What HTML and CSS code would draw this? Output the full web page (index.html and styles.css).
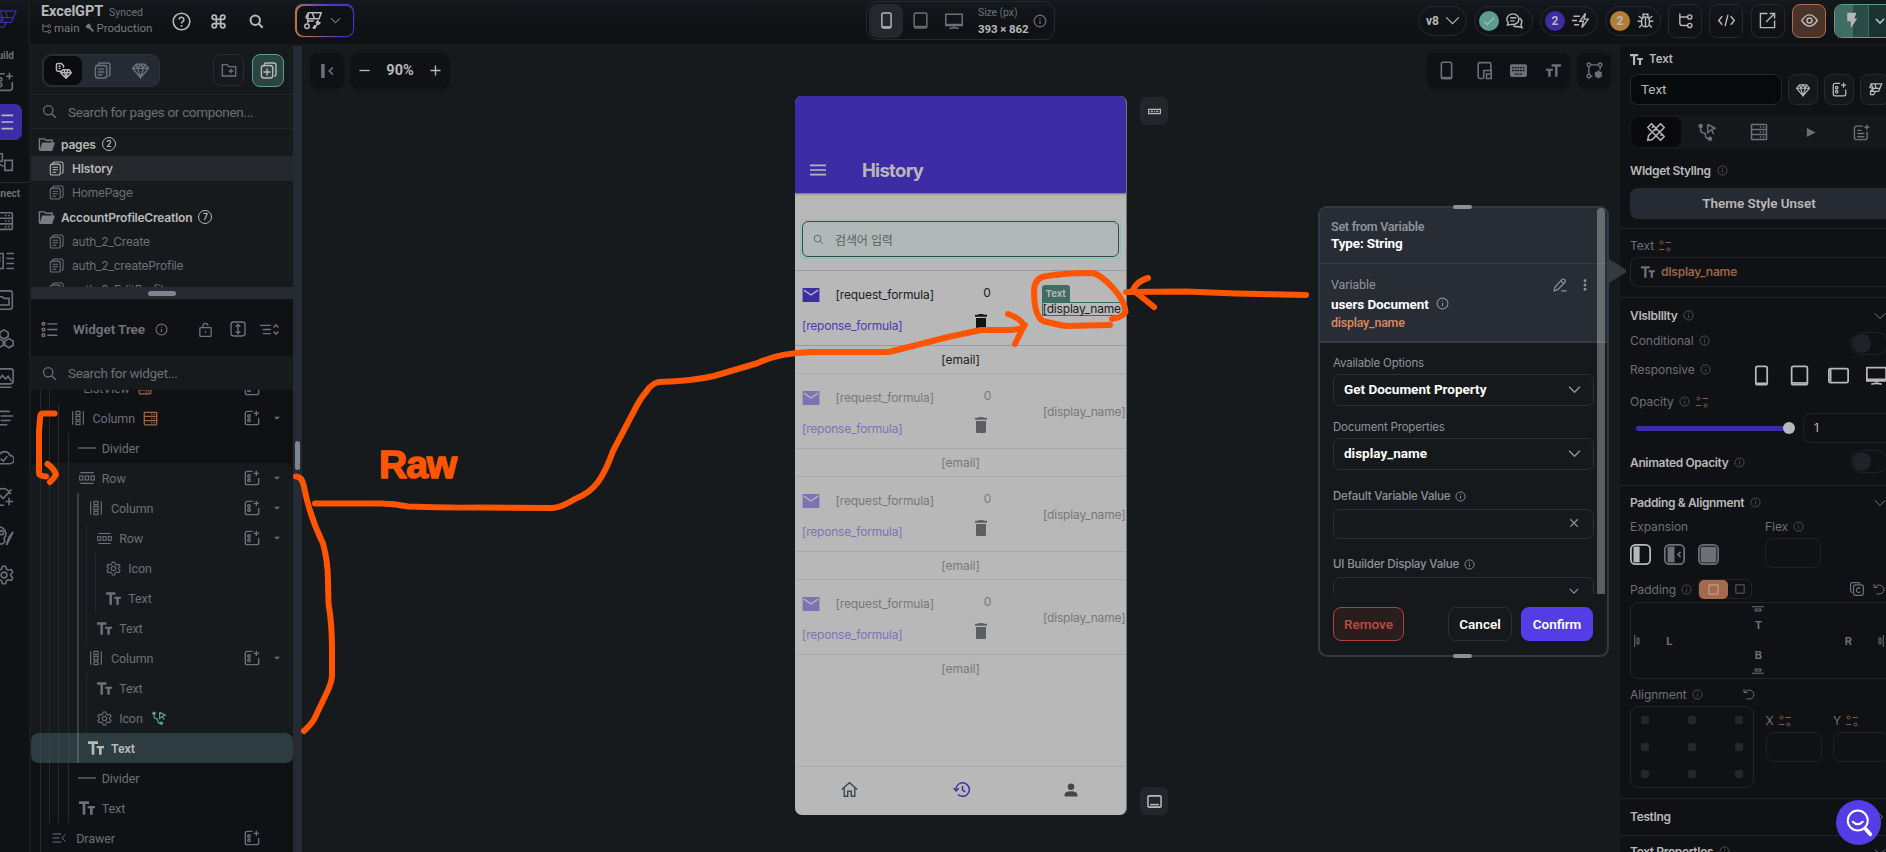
FILE: index.html
```
<!DOCTYPE html>
<html lang="en">
<head>
  <meta charset="utf-8">
  <title>ExcelGPT - Builder</title>
  <link rel="stylesheet" href="styles.css">
</head>
<body>
  <!-- icon sprite -->
  <svg class="sprite">
    <symbol id="logo" viewBox="0 0 24 24"><path d="M5 3h17l-3 7H8zM5 3 3 9l5 1M8 10l-4 5v5h5l3-5h5l2-5M11 3l2 7M4 15h8M8 10v5"/></symbol>
    <symbol id="aiwand" viewBox="0 0 24 24"><path d="M6 1h17l-3 8H5zM6 1 3 6v3M11 1l3 8M5 9v6M5 12h8M12 22l6-6"/><circle cx="4" cy="19" r="3"/><path class="fill" d="M15 14l4-4 1 3 3 1-4 4zM11 21l3 2 3-3-3-3z"/></symbol>
    <symbol id="branch" viewBox="0 0 24 24"><path d="M4 2v14q0 3 3 3h8M4 7h11"/><circle cx="18" cy="7" r="3"/><circle cx="18" cy="19" r="3"/></symbol>
    <symbol id="wrench" viewBox="0 0 24 24"><path d="M5 5l15 15M3 7a5 5 0 0 0 8 3l9 10M7 3a5 5 0 0 1 4 8M3 7l4 1 1-1-1-4"/></symbol>
    <symbol id="cmd" viewBox="0 0 24 24"><path d="M9 9h6v6H9zM9 9H6a3 3 0 1 1 3-3zM15 9V6a3 3 0 1 1 3 3zM15 15h3a3 3 0 1 1-3 3zM9 15v3a3 3 0 1 1-3-3z"/></symbol>
    <symbol id="search" viewBox="0 0 24 24"><circle cx="10" cy="10" r="7.500"/><path d="M15.500 15.500 22 22"/></symbol>
    <symbol id="help" viewBox="0 0 24 24"><circle cx="12" cy="12" r="10.500"/><path d="M9 9.500a3 3 0 1 1 4.500 2.700q-1.500.8-1.500 2.300M12 16.500v2"/></symbol>
    <symbol id="info" viewBox="0 0 24 24"><circle cx="12" cy="12" r="10"/><path d="M12 11v6M12 6.500v2"/></symbol>
    <symbol id="down" viewBox="0 0 24 24"><path d="M2 7l10 10L22 7"/></symbol>
    <symbol id="caret" viewBox="0 0 24 24"><path class="fill" d="M0 7h24L12 18z"/></symbol>
    <symbol id="page" viewBox="0 0 24 24"><path d="M6 6V4q0-2.500 2.500-2.500h11q3 0 3 3v13q0 2.500-2.500 2.500"/><rect x="2" y="5" width="16" height="17.500" rx="3.500"/><path d="M5.500 10h9M5.500 14h9M5.500 18h6"/></symbol>
    <symbol id="addpage" viewBox="0 0 24 24"><path d="M6 6V4q0-2.500 2.500-2.500h11q3 0 3 3v13q0 2.500-2.500 2.500"/><rect x="2" y="5" width="16" height="17.500" rx="3.500"/><path d="M10 9v10M5 14h10"/></symbol>
    <symbol id="gem" viewBox="0 0 24 24"><path d="M6 3h12l5 6-11 13L1 9zM1 9h22M6 3l2 6 4 13 4-13 2-6M8 9l4-6 4 6"/></symbol>
    <symbol id="pagegem" viewBox="0 0 24 24"><path d="M9 13H4q-2 0-2-2V4q0-2 2-2h5l3 3v3M5 6h3M5 9h3M11 11h9l3 4-7.500 8L8 15zM8 15h15M13 11l2.500 12L18 11"/></symbol>
    <symbol id="addfolder" viewBox="0 0 24 24"><path d="M2 4h7l3 3h10v14H2zM15 10v7M11.500 13.500h7"/></symbol>
    <symbol id="folder" viewBox="0 0 24 24"><path d="M2 20V4h7l2 2h9v4"/><path class="fill" d="M6 9h18l-4 12H2z"/></symbol>
    <symbol id="tree" viewBox="0 0 24 24"><circle cx="3.500" cy="4" r="2"/><circle cx="3.500" cy="12" r="2"/><circle cx="3.500" cy="20" r="2"/><path d="M9 4h14M9 12h14M9 20h14"/></symbol>
    <symbol id="lock" viewBox="0 0 24 24"><rect x="3" y="9" width="18" height="14" rx="1"/><path d="M8 9V6a4 4 0 0 1 8 0M12 14v3"/></symbol>
    <symbol id="updown" viewBox="0 0 24 24"><rect x="1.500" y="1.500" width="21" height="21" rx="4"/><path d="M12 5v14M8.500 8.500 12 5l3.500 3.500M8.500 15.500 12 19l3.500-3.500"/></symbol>
    <symbol id="collapse" viewBox="0 0 28 24"><path d="M0 6h16M4 12h12M4 18h12M20 9l3.500-4L27 9M20 15l3.500 4 3.500-4"/></symbol>
    <symbol id="column" viewBox="0 0 24 24"><path d="M4 2v20M20 2v20"/><rect x="9" y="2" width="6" height="5"/><rect x="9" y="9.500" width="6" height="5"/><rect x="9" y="17" width="6" height="5"/></symbol>
    <symbol id="row" viewBox="0 0 24 24"><path d="M2 4h20M2 20h20"/><rect x="1" y="9" width="5" height="6"/><rect x="9.500" y="9" width="5" height="6"/><rect x="18" y="9" width="5" height="6"/></symbol>
    <symbol id="line" viewBox="0 0 24 24"><path d="M0 12h24"/></symbol>
    <symbol id="gear" viewBox="0 0 24 24"><circle cx="12" cy="12" r="3.500"/><path d="M9 5l1.200-3.500h3.600L15 5l2 1.200 3.700-.7 1.800 3.100L20 11.500v1l2.500 2.900-1.800 3.100-3.700-.7L15 19l-1.200 3.500h-3.600L9 19l-2-1.200-3.700.7-1.800-3.100L4 12.500v-1L1.500 8.600l1.800-3.100 3.700.7z"/></symbol>
    <symbol id="tt" viewBox="0 0 24 24"><path class="fill" d="M0 2h15v4h-5.500v16h-4V6H0zM13 9h11v3.500h-3.500V22h-4v-9.500H13z"/></symbol>
    <symbol id="ttr" viewBox="0 0 24 24"><path class="fill" d="M24 2H9v4h5.500v16h4V6H24zM11 9H0v3.500h3.500V22h4v-9.500H11z"/></symbol>
    <symbol id="db" viewBox="0 0 24 24"><rect x="2" y="2" width="20" height="20" rx="1"/><path d="M2 8.700h20M2 15.400h20M13 5.400h2M17 5.400h2M13 12h2M17 12h2M13 18.700h2M17 18.700h2"/></symbol>
    <symbol id="addw" viewBox="0 0 24 24"><path d="M13 2H5Q2 2 2 5v14q0 3 3 3h14q3 0 3-3v-7M18.500 1v8M14.500 5h8"/><circle cx="7.500" cy="9" r="2"/><circle cx="7.500" cy="15.500" r="2"/></symbol>
    <symbol id="drawer" viewBox="0 0 24 24"><path d="M1 5h15M1 12h12M1 19h15M23 6l-6 6 6 6"/></symbol>
    <symbol id="action" viewBox="0 0 24 24"><circle class="fill" cx="3.500" cy="4" r="3"/><circle class="fill" cx="16" cy="21" r="3"/><path d="M3.500 5v4q0 4 3.500 4 3 0 3 4t5 4M13 2l10 5-5 2 3 6M13 2v11l5-4"/></symbol>
    <symbol id="phone" viewBox="0 0 24 24"><rect x="5.500" y="1.500" width="13" height="21" rx="2"/><path d="M6 21h12"/></symbol>
    <symbol id="tablet" viewBox="0 0 24 24"><rect x="3" y="1.500" width="18" height="21" rx="2"/><path d="M3.500 20.500h17"/></symbol>
    <symbol id="ltablet" viewBox="0 0 24 24"><rect x="1" y="4" width="22" height="16" rx="2"/><path d="M3 5v14"/></symbol>
    <symbol id="desktop" viewBox="0 0 24 24"><path d="M1 3h22v15H1zM1 16.500h22M6 22q6-2 12 0M12 18v3"/></symbol>
    <symbol id="chat" viewBox="0 0 24 24"><path d="M2 18.500 3.200 15A8.500 7.500 0 1 1 8 17.500zM19.500 8.500q4.500 4 1.500 9l1.500 4.500-5-1.500q-4 1-7-1M6 8h8.500M6 12.500h6"/></symbol>
    <symbol id="bolt" viewBox="0 0 24 24"><path d="M19 2l-8 11h5l-2 9 9-12h-6zM2 6h9M0 12h7M3 18h7"/></symbol>
    <symbol id="bug" viewBox="0 0 24 24"><rect x="6.500" y="7" width="11" height="14" rx="5.500"/><path d="M8 7a4 4 0 0 1 8 0M12 8v13M6 13H1M18 13h5M7 9 2.500 6M17 9l4.500-3M7 18l-4 4M17 18l4 4M8 2l2 2M16 2l-2 2"/></symbol>
    <symbol id="code" viewBox="0 0 24 24"><path d="M6 6l-5 6 5 6M18 6l5 6-5 6M14 4l-4 16"/></symbol>
    <symbol id="open" viewBox="0 0 24 24"><path d="M12 2H2v20h20V12M15 2h7v7M22 2 10 14"/></symbol>
    <symbol id="eye" viewBox="0 0 24 24"><path d="M1 12q11-16 22 0-11 16-22 0z"/><circle cx="12" cy="12" r="3.500"/></symbol>
    <symbol id="flash" viewBox="0 0 24 24"><path class="fill" d="M6 1h13l-3 8h4l-9 14v-10H6z"/></symbol>
    <symbol id="hide" viewBox="0 0 24 24"><path class="fill" d="M2 0h6v24H2z"/><path d="M22 6l-6 6 6 6"/></symbol>
    <symbol id="minus" viewBox="0 0 24 24"><path d="M1 12h22"/></symbol>
    <symbol id="plus" viewBox="0 0 24 24"><path d="M1 12h22M12 1v22"/></symbol>
    <symbol id="pip" viewBox="0 0 24 24"><path d="M10 22H6q-2 0-2-2V4q0-2 2-2h12q2 0 2 2v7M11 22V12h9.500v10M14.500 22v-5.500h6V22z"/></symbol>
    <symbol id="kbd" viewBox="0 0 24 24"><rect class="fill" x="0" y="3" width="24" height="18" rx="2.500"/><path class="keys" d="M3 8h18M3 12h18M7 17h10"/></symbol>
    <symbol id="nodes" viewBox="0 0 24 24"><circle cx="4" cy="4" r="2.500"/><circle cx="20" cy="4" r="2.500"/><circle cx="4" cy="20" r="2.500"/><path d="M6.500 4h11M4 6.500v11M20 6.500V11M6.500 20H9"/><path class="fill" d="M16 12h3l.5 2 2-.5 1.500 2.500-1.500 1.500 1.500 1.500-1.500 2.500-2-.5-.5 2h-3l-.5-2-2 .5-1.500-2.500 1.500-1.500-1.500-1.500 1.500-2.500 2 .5z"/></symbol>
    <symbol id="menu" viewBox="0 0 24 24"><path d="M0 5h24M0 12h24M0 19h24"/></symbol>
    <symbol id="mail" viewBox="0 0 24 20"><path class="fill" d="M0 0h24v20H0z"/><path class="hole" d="M2 3l10 7 10-7"/></symbol>
    <symbol id="trash" viewBox="0 0 18 24"><path class="fill" d="M0 1h5l1-1h6l1 1h5v3H0zM1.500 6h15v16q0 2-2 2h-11q-2 0-2-2z"/></symbol>
    <symbol id="home" viewBox="0 0 24 24"><path d="M1 12 12 2.500 23 12M4.500 10v11.500H9.500v-7h5v7h5V10"/></symbol>
    <symbol id="history" viewBox="0 0 24 24"><path d="M4 12a9.500 9.500 0 1 1 3 7M1 10l3.500 4L8 10M13.500 7v6l4 2.500"/></symbol>
    <symbol id="person" viewBox="0 0 24 24"><circle class="fill" cx="12" cy="6.500" r="5.500"/><path class="fill" d="M1 23v-3q0-6 11-6t11 6v3z"/></symbol>
    <symbol id="appbar" viewBox="0 0 24 24"><path d="M1 8h22v8H1zM5 12h4M11 12h2M15 12h4"/></symbol>
    <symbol id="navbar" viewBox="0 0 24 24"><rect x="1.500" y="3" width="21" height="18" rx="2"/><path d="M5 17h14"/></symbol>
    <symbol id="pencil" viewBox="0 0 24 24"><path d="M2 22l1-6L16 2q2-1 4 1t1 4L8 20zM14 5l4 4M14 22h9"/></symbol>
    <symbol id="dots" viewBox="0 0 24 24"><circle class="fill" cx="12" cy="3.500" r="2.800"/><circle class="fill" cx="12" cy="12" r="2.800"/><circle class="fill" cx="12" cy="20.500" r="2.800"/></symbol>
    <symbol id="x" viewBox="0 0 24 24"><path d="M3 3l18 18M21 3 3 21"/></symbol>
    <symbol id="tools" viewBox="0 0 24 24"><path d="M6 1 1 6l17 17 5-5zM18 1l5 5L7 22l-6 1 1-6zM9 4 6.500 6.500M13 8l-2 2M17 12l-2.500 2.500M20 15l-2 2"/></symbol>
    <symbol id="play" viewBox="0 0 24 24"><path class="fill" d="M4 2l19 10-19 10z"/></symbol>
    <symbol id="note" viewBox="0 0 24 24"><path d="M14 3H5Q2 3 2 6v13q0 3 3 3h12q3 0 3-3v-8M19.500 1v7M16 4.500h7M6 9h6M6 13.500h10M6 18h10"/></symbol>
    <symbol id="bind" viewBox="0 0 24 24"><circle cx="5" cy="5" r="3"/><circle cx="19" cy="19" r="3"/><path d="M13 5h11M0 19h11"/></symbol>
    <symbol id="copy" viewBox="0 0 24 24"><path d="M4 18q-3 0-3-3V4q0-3 3-3h10q3 0 3 3"/><rect x="6" y="5" width="17" height="18" rx="4"/><path d="M18 11.500a4 4 0 1 0 0 5"/></symbol>
    <symbol id="undo" viewBox="0 0 24 24"><path d="M2 2v7h7M3 9a10 9 0 1 1 4 12"/></symbol>
    <symbol id="ex1" viewBox="0 0 24 24"><rect x="1" y="1" width="22" height="22" rx="5"/><path class="fill" d="M4 3h7v18H4z"/></symbol>
    <symbol id="ex2" viewBox="0 0 24 24"><rect x="1" y="1" width="22" height="22" rx="5"/><path class="fill" d="M4 3h8v18H4z"/><path d="M19 9l-3 3 3 3"/></symbol>
    <symbol id="ex3" viewBox="0 0 24 24"><rect x="1" y="1" width="22" height="22" rx="5"/><rect class="fill" x="3" y="3" width="18" height="18" rx="2"/></symbol>
    <symbol id="padtop" viewBox="0 0 24 12"><path d="M0 1.500h24M6 6h12v4H6z"/></symbol>
    <symbol id="square" viewBox="0 0 24 24"><path d="M2 2h20v20H2z"/></symbol>
    <symbol id="comps" viewBox="0 0 24 24"><path d="M2 2h8v9H2zM13 10h9v12h-9zM6 11q0 6 7 6"/></symbol>
    <symbol id="cols" viewBox="0 0 24 24"><path d="M1 3h10v18H1zM15 3h9M15 9h9M15 15h9M15 21h9M4 8h4M4 12h4"/></symbol>
    <symbol id="file" viewBox="0 0 24 24"><rect x="1" y="1" width="21" height="22" rx="3"/><path d="M5 8h5l2 2h6v8H5z"/></symbol>
    <symbol id="hex" viewBox="0 0 24 24"><path d="M12 1l5 3v5l-5 3-5-3V4zM6 11.500l5 3v5l-5 3-5-3v-5zM18 11.500l5 3v5l-5 3-5-3v-5z"/></symbol>
    <symbol id="image" viewBox="0 0 24 24"><rect x="1" y="1" width="22" height="18" rx="3"/><path d="M4 16l6-7 4 4 3-3 4 6M3 23h18"/></symbol>
    <symbol id="lines" viewBox="0 0 24 24"><path d="M1 4h18M8 9.500h15M8 15h12M2 20h14"/></symbol>
    <symbol id="cloud" viewBox="0 0 24 24"><path d="M6 20a5 5 0 0 1 0-10 7 7 0 0 1 13 0 5 5 0 0 1 0 10zM8 14l3 3 5-6"/></symbol>
    <symbol id="check" viewBox="0 0 24 24"><path d="M20 10a10 10 0 1 0-8 13M7 11l4 4L21 4M18 14v9M14 18.500h9"/></symbol>
    <symbol id="palette" viewBox="0 0 24 24"><path d="M12 15a8 8 0 1 0-8 2q3 0 2 3 3 4 7-1zM23 7l-8 16M23 7q-6 6-8 16"/><circle cx="9" cy="8" r="2.500"/></symbol>
    <symbol id="tick" viewBox="0 0 24 24"><path d="M4 13l5 5L21 6"/></symbol>
  </svg>

  <header class="topbar">
    <div class="brand"><svg class="ic"><use href="#logo"/></svg></div>
    <div class="project">
      <div><b>ExcelGPT</b><span class="synced">Synced</span></div>
      <div class="env"><svg class="ic s11"><use href="#branch"/></svg>main<svg class="ic s10"><use href="#wrench"/></svg>Production</div>
    </div>
    <div class="quick">
      <svg class="ic s19"><use href="#help"/></svg>
      <svg class="ic s17"><use href="#cmd"/></svg>
      <svg class="ic s15"><use href="#search"/></svg>
    </div>
    <button class="ai"><span><svg class="ic s18"><use href="#aiwand"/></svg><svg class="ic s11"><use href="#down"/></svg></span></button>
    <div class="devices">
      <div class="dev on"><svg class="ic s17"><use href="#phone"/></svg></div>
      <div class="dev"><svg class="ic s17"><use href="#tablet"/></svg></div>
      <div class="dev"><svg class="ic s18"><use href="#desktop"/></svg></div>
      <div class="size"><span>Size (px)</span><b>393 × 862</b></div>
      <svg class="ic s14"><use href="#info"/></svg>
    </div>
    <div class="actions">
      <div class="pill version">v8<svg class="ic s15"><use href="#down"/></svg></div>
      <div class="pill status"><span class="dot green"><svg class="ic s14"><use href="#tick"/></svg></span><svg class="ic s17"><use href="#chat"/></svg></div>
      <div class="pill runs"><span class="dot violet">2</span><svg class="ic s17"><use href="#bolt"/></svg></div>
      <div class="pill bugs"><span class="dot amber">2</span><svg class="ic s17"><use href="#bug"/></svg></div>
      <div class="sq"><svg class="ic s17"><use href="#branch"/></svg></div>
      <div class="sq"><svg class="ic s17"><use href="#code"/></svg></div>
      <div class="sq"><svg class="ic s17"><use href="#open"/></svg></div>
      <div class="sq preview"><svg class="ic s17"><use href="#eye"/></svg></div>
      <div class="run"><div><svg class="ic s17"><use href="#flash"/></svg></div><svg class="ic s10"><use href="#down"/></svg></div>
    </div>
  </header>

  <div class="workspace">
    <nav class="rail">
      <div class="railin">
        <span class="cap build">Build</span>
        <svg class="ic"><use href="#addw"/></svg>
        <div class="railon"><svg class="ic"><use href="#tree"/></svg></div>
        <svg class="ic"><use href="#comps"/></svg>
        <hr>
        <span class="cap">Connect</span>
        <svg class="ic"><use href="#db"/></svg>
        <svg class="ic"><use href="#cols"/></svg>
        <svg class="ic"><use href="#file"/></svg>
        <svg class="ic"><use href="#hex"/></svg>
        <svg class="ic"><use href="#image"/></svg>
        <svg class="ic"><use href="#lines"/></svg>
        <svg class="ic"><use href="#cloud"/></svg>
        <svg class="ic"><use href="#check"/></svg>
        <svg class="ic"><use href="#palette"/></svg>
        <svg class="ic"><use href="#gear"/></svg>
      </div>
    </nav>

    <aside class="left">
      <div class="pages">
        <div class="pagetabs">
          <div class="seg">
            <div class="on"><svg class="ic s17"><use href="#pagegem"/></svg></div>
            <div><svg class="ic s17"><use href="#page"/></svg></div>
            <div><svg class="ic s17"><use href="#gem"/></svg></div>
          </div>
          <div class="fbtn"><svg class="ic s16"><use href="#addfolder"/></svg></div>
          <div class="fbtn add"><svg class="ic s17"><use href="#addpage"/></svg></div>
        </div>
        <div class="find top"><svg class="ic s15"><use href="#search"/></svg>Search for pages or componen...</div>
        <div class="plist">
          <div class="folder"><svg class="ic s17"><use href="#folder"/></svg>pages<i>2</i></div>
          <div class="pg on"><svg class="ic s15"><use href="#page"/></svg>HIstory</div>
          <div class="pg"><svg class="ic s15"><use href="#page"/></svg>HomePage</div>
          <div class="folder"><svg class="ic s17"><use href="#folder"/></svg><span class="acc">AccountProfileCreatIon</span><i>7</i></div>
          <div class="pg"><svg class="ic s15"><use href="#page"/></svg>auth_2_Create</div>
          <div class="pg"><svg class="ic s15"><use href="#page"/></svg>auth_2_createProfile</div>
          <div class="pg"><svg class="ic s15"><use href="#page"/></svg>auth_2_EditProfile</div>
        </div>
      </div>
      <div class="hsplit"><span></span></div>
      <div class="treehead">
        <svg class="ic s17"><use href="#tree"/></svg>
        <b>Widget Tree</b>
        <svg class="ic s13"><use href="#info"/></svg>
        <svg class="ic s15 push"><use href="#lock"/></svg>
        <svg class="ic s16"><use href="#updown"/></svg>
        <svg class="ic s19"><use href="#collapse"/></svg>
      </div>
      <div class="find"><svg class="ic s15"><use href="#search"/></svg>Search for widget...</div>
      <div class="tree">
        <div class="tr first"><i></i><i></i><svg class="ic s14 w"><use href="#line"/></svg><span>ListView</span><svg class="ic s14 data"><use href="#db"/></svg><svg class="ic s16 addw"><use href="#addw"/></svg><em></em></div>
        <div class="tr"><i></i><i></i><i></i><svg class="ic s16 w"><use href="#column"/></svg><span>Column</span><svg class="ic s15 data"><use href="#db"/></svg><svg class="ic s16 addw"><use href="#addw"/></svg><svg class="ic s6"><use href="#caret"/></svg></div>
        <div class="tr"><i></i><i></i><i></i><i></i><svg class="ic s18 w"><use href="#line"/></svg><span>Divider</span></div>
        <div class="branch">
          <div class="tr"><i></i><i></i><i></i><i></i><svg class="ic s16 w"><use href="#row"/></svg><span>Row</span><svg class="ic s16 addw"><use href="#addw"/></svg><svg class="ic s6"><use href="#caret"/></svg></div>
          <div class="tr"><i></i><i></i><i></i><i></i><i class="hl"></i><svg class="ic s16 w"><use href="#column"/></svg><span>Column</span><svg class="ic s16 addw"><use href="#addw"/></svg><svg class="ic s6"><use href="#caret"/></svg></div>
          <div class="tr"><i></i><i></i><i></i><i></i><i class="hl"></i><i></i><svg class="ic s15 w"><use href="#row"/></svg><span>Row</span><svg class="ic s16 addw"><use href="#addw"/></svg><svg class="ic s6"><use href="#caret"/></svg></div>
          <div class="tr"><i></i><i></i><i></i><i></i><i class="hl"></i><i></i><i></i><svg class="ic s15 w"><use href="#gear"/></svg><span>Icon</span></div>
          <div class="tr"><i></i><i></i><i></i><i></i><i class="hl"></i><i></i><i></i><svg class="ic s15 w"><use href="#tt"/></svg><span>Text</span></div>
          <div class="tr"><i></i><i></i><i></i><i></i><i class="hl"></i><i></i><svg class="ic s15 w"><use href="#tt"/></svg><span>Text</span></div>
          <div class="tr"><i></i><i></i><i></i><i></i><i class="hl"></i><svg class="ic s16 w"><use href="#column"/></svg><span>Column</span><svg class="ic s16 addw"><use href="#addw"/></svg><svg class="ic s6"><use href="#caret"/></svg></div>
          <div class="tr"><i></i><i></i><i></i><i></i><i class="hl"></i><i></i><svg class="ic s15 w"><use href="#tt"/></svg><span>Text</span></div>
          <div class="tr"><i></i><i></i><i></i><i></i><i class="hl"></i><i></i><svg class="ic s15 w"><use href="#gear"/></svg><span>Icon</span><svg class="ic s14 act"><use href="#action"/></svg></div>
        </div>
        <div class="tr sel"><i></i><i></i><i></i><i></i><i class="hl"></i><svg class="ic s16 w"><use href="#tt"/></svg><span>Text</span></div>
        <div class="tr"><i></i><i></i><i></i><i></i><svg class="ic s18 w"><use href="#line"/></svg><span>Divider</span></div>
        <div class="tr"><i></i><i></i><i></i><i></i><svg class="ic s16 w"><use href="#tt"/></svg><span>Text</span></div>
        <div class="tr"><i></i><i class="no"></i><svg class="ic s14 w drawer"><use href="#drawer"/></svg><span>Drawer</span><svg class="ic s16 addw"><use href="#addw"/></svg><em></em></div>
      </div>
    </aside>
    <div class="vsplit"><span></span></div>

    <main class="canvas">
      <div class="tools">
        <div class="tbox one"><svg class="ic s14 thick"><use href="#hide"/></svg></div>
        <div class="tbox zoom"><svg class="ic s11 thick"><use href="#minus"/></svg><b>90%</b><svg class="ic s11 thick"><use href="#plus"/></svg></div>
        <div class="tbox modes"><svg class="ic s19"><use href="#phone"/></svg><svg class="ic s19"><use href="#pip"/></svg><svg class="ic s17 kb"><use href="#kbd"/></svg><svg class="ic s15"><use href="#ttr"/></svg></div>
        <div class="tbox one"><svg class="ic s17"><use href="#nodes"/></svg></div>
      </div>
      <div class="stage">
        <div class="phone">
          <div class="appbar"><svg class="ic s16"><use href="#menu"/></svg><h1>History</h1></div>
          <div class="body">
            <div class="field"><div><svg class="ic s11"><use href="#search"/></svg>검색어 입력</div></div>
            <div class="item live">
              <div class="c1"><p><svg class="mail"><use href="#mail"/></svg>[request_formula]</p><p class="resp">[reponse_formula]</p></div>
              <div class="c2"><span>0</span><svg class="trash"><use href="#trash"/></svg></div>
              <div class="c3"><span class="picked"><b>Text</b>[display_name]</span></div>
            </div>
            <div class="email live">[email]</div>
            <div class="item">
              <div class="c1"><p><svg class="mail"><use href="#mail"/></svg>[request_formula]</p><p class="resp">[reponse_formula]</p></div>
              <div class="c2"><span>0</span><svg class="trash"><use href="#trash"/></svg></div>
              <div class="c3"><span>[display_name]</span></div>
            </div>
            <div class="email">[email]</div>
            <div class="item">
              <div class="c1"><p><svg class="mail"><use href="#mail"/></svg>[request_formula]</p><p class="resp">[reponse_formula]</p></div>
              <div class="c2"><span>0</span><svg class="trash"><use href="#trash"/></svg></div>
              <div class="c3"><span>[display_name]</span></div>
            </div>
            <div class="email">[email]</div>
            <div class="item">
              <div class="c1"><p><svg class="mail"><use href="#mail"/></svg>[request_formula]</p><p class="resp">[reponse_formula]</p></div>
              <div class="c2"><span>0</span><svg class="trash"><use href="#trash"/></svg></div>
              <div class="c3"><span>[display_name]</span></div>
            </div>
            <div class="email">[email]</div>
          </div>
          <div class="nav"><svg class="ic s17"><use href="#home"/></svg><svg class="ic s17 cur"><use href="#history"/></svg><svg class="ic s14"><use href="#person"/></svg></div>
        </div>
        <div class="chips">
          <div><svg class="ic s13"><use href="#appbar"/></svg></div>
          <div><svg class="ic s15"><use href="#navbar"/></svg></div>
        </div>
      </div>
    </main>

    <aside class="props">
      <div class="phead"><svg class="ic s13"><use href="#tt"/></svg>Text</div>
      <div class="nameline">
        <div class="name">Text</div>
        <div class="nb"><svg class="ic s14"><use href="#gem"/></svg></div>
        <div class="nb"><svg class="ic s15"><use href="#addw"/></svg></div>
        <div class="nb"><svg class="ic s15"><use href="#logo"/></svg></div>
      </div>
      <div class="ptabs">
        <div class="on"><svg class="ic s18"><use href="#tools"/></svg></div>
        <div><svg class="ic s18"><use href="#action"/></svg></div>
        <div><svg class="ic s18"><use href="#db"/></svg></div>
        <div><svg class="ic s11"><use href="#play"/></svg></div>
        <div><svg class="ic s17"><use href="#note"/></svg></div>
      </div>
      <section class="styling">
        <h3>WIdget StylIng <svg class="ic s11"><use href="#info"/></svg></h3>
        <div class="theme">Theme Style Unset</div>
      </section>
      <section class="textval">
        <label>Text <svg class="ic s12 o"><use href="#bind"/></svg></label>
        <div class="bound"><svg class="ic s14"><use href="#tt"/></svg>dIsplay_name</div>
      </section>
      <section class="vis">
        <h3>VIsIbIlIty <svg class="ic s11"><use href="#info"/></svg><svg class="ic s12 fold"><use href="#down"/></svg></h3>
        <div class="pr cond"><label>Conditional <svg class="ic s11"><use href="#info"/></svg></label><span class="toggle"></span></div>
        <div class="pr resp2"><label>Responsive <svg class="ic s11"><use href="#info"/></svg></label>
          <span class="rdev"><svg class="ic s21"><use href="#phone"/></svg><svg class="ic s21"><use href="#tablet"/></svg><svg class="ic s21"><use href="#ltablet"/></svg><svg class="ic s21"><use href="#desktop"/></svg></span></div>
        <div class="pr opa"><label>Opacity <svg class="ic s11"><use href="#info"/></svg><svg class="ic s12 o"><use href="#bind"/></svg></label></div>
        <div class="slider"><span></span><b></b><div>1</div></div>
        <div class="pr anim"><h3>Animated Opacity <svg class="ic s11"><use href="#info"/></svg></h3><span class="toggle"></span></div>
      </section>
      <section class="pad">
        <h3>Padding &amp; Alignment <svg class="ic s11"><use href="#info"/></svg><svg class="ic s12 fold"><use href="#down"/></svg></h3>
        <div class="expand">
          <div class="ecol"><label>Expansion</label><div><svg class="ic s21 lit"><use href="#ex1"/></svg><svg class="ic s21"><use href="#ex2"/></svg><svg class="ic s21"><use href="#ex3"/></svg></div></div>
          <div><label>Flex <svg class="ic s11"><use href="#info"/></svg></label><div class="num"></div></div>
        </div>
        <div class="padline"><label>Padding <svg class="ic s11"><use href="#info"/></svg></label>
          <div class="padsw"><span><svg class="ic s11"><use href="#square"/></svg></span><svg class="ic s10"><use href="#square"/></svg></div>
          <svg class="ic s14 cp"><use href="#copy"/></svg><svg class="ic s12"><use href="#undo"/></svg></div>
        <div class="padbox">
          <svg class="side l"><use href="#padtop"/></svg><b>L</b>
          <div><svg class="edge"><use href="#padtop"/></svg><b class="t">T</b><b class="b">B</b><svg class="edge flip"><use href="#padtop"/></svg></div>
          <b>R</b><svg class="side r"><use href="#padtop"/></svg>
        </div>
        <div class="alignline"><label>Alignment <svg class="ic s11"><use href="#info"/></svg></label><svg class="ic s12"><use href="#undo"/></svg></div>
        <div class="align">
          <div class="grid9"><i></i><i></i><i></i><i></i><i></i><i></i><i></i><i></i><i></i></div>
          <div class="xy"><label>X <svg class="ic s12 o"><use href="#bind"/></svg></label><div class="num"></div></div>
          <div class="xy"><label>Y <svg class="ic s12 o"><use href="#bind"/></svg></label><div class="num"></div></div>
        </div>
      </section>
      <section class="testing"><h3>TestIng <svg class="ic s12 fold side-arrow"><use href="#down"/></svg></h3></section>
      <section class="textprops"><h3>Text PropertIes <svg class="ic s11"><use href="#info"/></svg><svg class="ic s12 fold"><use href="#down"/></svg></h3></section>
    </aside>
  </div>

  <!-- variable dialog, floats over the canvas -->
  <div class="dialog">
    <span class="grip top"></span>
    <div class="scroll">
      <div class="dhead"><span>Set from Variable</span><b>Type: String</b></div>
      <div class="dvar">
        <div class="vline"><span>Variable</span><svg class="ic s14"><use href="#pencil"/></svg><svg class="ic s12"><use href="#dots"/></svg></div>
        <b>users Document <svg class="ic s13"><use href="#info"/></svg></b>
        <em>display_name</em>
      </div>
      <div class="dform">
        <label>Available Options</label>
        <div class="select">Get Document Property<svg class="ic s13"><use href="#down"/></svg></div>
        <label class="l2">Document Properties</label>
        <div class="select">display_name<svg class="ic s13"><use href="#down"/></svg></div>
        <label class="l3">Default Variable Value <svg class="ic s11"><use href="#info"/></svg></label>
        <div class="select short"><svg class="ic s10"><use href="#x"/></svg></div>
        <label class="l4">UI Builder Display Value <svg class="ic s11"><use href="#info"/></svg></label>
        <div class="select short"><svg class="ic s10"><use href="#down"/></svg></div>
      </div>
    </div>
    <span class="bar"></span>
    <div class="dfoot"><button class="remove">Remove</button><button class="cancel">Cancel</button><button class="confirm">Confirm</button></div>
    <span class="grip bottom"></span>
    <span class="pointer"></span>
  </div>

  <div class="fab">
    <svg viewBox="0 0 24 24"><circle cx="11" cy="10" r="8"/><path d="M7 11q4 4 8 0"/><path class="handle" d="M17.500 17 21 21"/></svg>
  </div>

  <!-- marker notes drawn over the screen -->
  <svg class="notes" viewBox="0 0 1886 852">
    <path d="M54.500 413.500H43q-3 0-3 5L39 432v41q0 3 7 3.500M47.500 464q6 4 8.500 10.500-2 4-6 7.500"/>
    <path d="M296 476.500q6 0 8 10 5 28 19 57 5 18 5 38l.5 22q3.500 20 3.500 46v26q0 7-7 21l-11 23q-3 5-10 11.500"/>
    <path d="M315 503.500h66q13 0 27 3 35 1.500 72 1l72 .5q8 0 23-9 15-6 23-17 8-11 15-31l21-40q6-12 12-19 6-9 13-10 34-1 55-6l44-13q20-10 53-11h78l59-15 33-7h27q14 0 17-5M1008 314q14 5 16 12-4 8-9 18"/>
    <path d="M1110 325l-43 1q-9-1-24-5-9-5-9-31 1-13 13-14 16-3 46-3 8 2 20 15 12 13 12.500 24-2 5-13.500 7"/>
    <path d="M1126 292l60-.5 50 2 70 1.500M1148 278q-11 3-15 12l21 17"/>
    <text x="379" y="478">Raw</text>
  </svg>
</body>
</html>
```

FILE: styles.css
```
* { box-sizing: border-box; }
html, body { height: 100%; }
body {
  margin: 0;
  overflow: hidden;
  background: #171a1d;
  color: #6c7078;
  font-family: Roboto, "Open Sans", sans-serif;
  font-size: 13px;
  display: flex;
  flex-direction: column;
}
h1, h3, p { margin: 0; }
button { font: inherit; padding: 0; }
i, em { font-style: normal; }

/* icons */
.sprite { position: absolute; width: 0; height: 0; }
.ic { width: 20px; height: 20px; fill: none; stroke: currentColor; stroke-width: 2; flex: none; overflow: visible; display: block; }
.ic .fill, .fill { fill: currentColor; stroke: none; }
.hole { fill: none; stroke: #b8b8b8; stroke-width: 2; }
.keys { stroke: #101115; stroke-width: 1.800; stroke-dasharray: 2.500 1.200; }
.thick { stroke-width: 3; }
.s6 { width: 6px; height: 6px; }
.s10 { width: 10px; height: 10px; }
.s11 { width: 11px; height: 11px; }
.s12 { width: 12px; height: 12px; }
.s13 { width: 13px; height: 13px; }
.s14 { width: 14px; height: 14px; }
.s15 { width: 15px; height: 15px; }
.s16 { width: 16px; height: 16px; }
.s17 { width: 17px; height: 17px; }
.s18 { width: 18px; height: 18px; }
.s19 { width: 19px; height: 19px; }
.s21 { width: 21px; height: 21px; }

/* top bar */
.topbar {
  height: 44px;
  flex: none;
  display: flex;
  background: linear-gradient(#14191c, #101115 60%);
  color: #b8b8b8;
}
.topbar > * { flex: none; }
.brand { width: 30px; border-right: 2px solid #1a1c20; color: #3d2ca6; padding-top: 8px; overflow: hidden; }
.brand .ic { margin-left: -5px; width: 23px; height: 23px; stroke-width: 1.300; }
.project { width: 130px; padding: 3px 0 0 11px; white-space: nowrap; }
.project b { font-size: 14.500px; letter-spacing: -.1px; }
.synced { font-size: 10.500px; color: #6c7078; margin-left: 6px; }
.env { display: flex; align-items: center; gap: 2px; font-size: 11.500px; color: #777a80; margin-top: 1px; }
.env .s10 { margin-left: 3px; stroke-width: 4; }
.quick { width: 135px; display: flex; align-items: center; gap: 19.500px; padding: 0 0 2px 11.500px; }
.quick .s15 { stroke-width: 3.200; margin-left: 2px; }
.quick .s17 { stroke-width: 2.500; }
.ai {
  width: 59px; height: 33px; margin-top: 4px; border: 0; border-radius: 8px; padding: 1.500px;
  background: linear-gradient(70deg, #b5764f 15%, #4a36c4 65%);
  color: #b8b8b8;
  box-shadow: 0 0 3px #4a36c455;
}
.ai span { display: flex; align-items: center; gap: 8px; height: 100%; padding-left: 7px; border-radius: 7px; background: #101115; }
.devices {
  margin: 1px 0 0 512px; width: 189px; height: 39px;
  border: 1px solid #26292e; border-radius: 11px;
  display: flex; align-items: center; padding-left: 2px; color: #6c7078;
}
.dev { width: 34px; height: 34px; display: grid; place-items: center; }
.dev.on { background: #24282d; border-radius: 9px; color: #b8b8b8; }
.size { margin-left: 7px; width: 55px; font-size: 10.500px; line-height: 16px; white-space: nowrap; letter-spacing: -.1px; }
.size span, .size b { display: block; }
.size b { font-size: 11.500px; color: #b8b8b8; }
.actions { margin-left: 363px; display: flex; align-items: center; padding-bottom: 3px; }
.pill { height: 30px; border: 1px solid #26292e; border-radius: 15px; display: flex; align-items: center; margin-right: 7px; padding-left: 4px; gap: 7px; }
.version { width: 49px; padding-left: 7px; gap: 6px; font-weight: bold; font-size: 12px; }
.status { width: 59px; }
.runs { width: 58px; }
.bugs { width: 56px; }
.dot { width: 20px; height: 20px; border-radius: 50%; display: grid; place-items: center; font-weight: bold; font-size: 12px; flex: none; }
.green { background: #5d9d8f; }
.violet { background: #3d2ca6; }
.amber { background: #b37f37; }
.sq { width: 34px; height: 34px; border: 1px solid #26292e; border-radius: 8px; display: grid; place-items: center; margin-right: 7.400px; flex: none; }
.preview { background: #4a3329; border-color: #a96f50; }
.run { width: 60px; height: 34px; border: 1px solid #5d9d8f; border-radius: 8px; background: #1b3330; display: flex; align-items: center; gap: 6px; overflow: hidden; flex: none; }
.run div { width: 34px; height: 100%; border-right: 1px solid #3d6b62; display: grid; place-items: center; background: linear-gradient(90deg, #3f6d63 18px, #2a4a45 18px); }
.run .s10 { stroke-width: 4; }

.workspace { display: flex; flex: 1; min-height: 0; }

/* icon rail */
.rail { width: 31px; background: #101115; border-right: 2px solid #191b1f; overflow: hidden; flex: none; }
.railin { width: 50px; margin-left: -21px; display: flex; flex-direction: column; align-items: center; padding-top: 5px; }
.cap { font-size: 10px; font-weight: bold; line-height: 14px; margin-right: 3px; }
.build { margin-bottom: 9px; }
.railin > .ic { margin-bottom: 19.300px; stroke-width: 1.900; flex: none; }
.railon { width: 36px; height: 36px; border-radius: 7px; background: #3d2ca6; color: #b8b8b8; display: grid; place-items: center; margin: -7px 0 12px; flex: none; }
.railin > .railon + .ic { margin-bottom: 10px; }
.railin hr { width: 100%; border: 0; border-top: 1px solid #26292e; margin: 0 0 4px; }
.railin hr + .cap { margin-bottom: 10px; margin-right: 5px; }

/* pages panel */
.left { width: 262px; flex: none; display: flex; flex-direction: column; }
.pages { height: 243px; overflow: hidden; flex: none; }
.pagetabs { height: 51px; display: flex; padding: 10px 0 0 11px; border-bottom: 1px solid #212529; }
.seg { width: 118px; height: 33px; border: 1px solid #2a2e35; border-radius: 9px; background: #262a32; display: flex; margin-right: 53px; }
.seg div { flex: 1; display: grid; place-items: center; }
.seg .on { background: #0b0c0e; border-radius: 8px; color: #b8b8b8; margin: 1px; }
.fbtn { width: 31px; height: 32px; border: 1px solid #2a2e34; border-radius: 8px; display: grid; place-items: center; margin-right: 8px; }
.fbtn.add { width: 32px; height: 33px; background: #2b4440; border-color: #5d9d8f; color: #b8b8b8; margin-right: 0; }
.find { height: 34px; display: flex; align-items: center; gap: 11px; padding-left: 11px; font-size: 13.500px; letter-spacing: -.33px; background: #171a1d; flex: none; }
.find.top { border-bottom: 1px solid #212529; }
.plist { padding-top: 3px; }
.folder, .pg { height: 24.300px; display: flex; align-items: center; font-size: 12px; font-family: Inter, sans-serif; }
.folder { padding-left: 7px; gap: 6px; color: #b8b8b8; font-weight: 600; letter-spacing: -.2px; }
.folder .ic { color: #777b82; }
.folder i { width: 14px; height: 14px; border: 1px solid #b8b8b8; border-radius: 50%; font-size: 8.500px; display: grid; place-items: center; }
.acc { letter-spacing: -.22px; }
.pg { padding-left: 18px; gap: 8px; letter-spacing: -.2px; }
.pg .ic { stroke-width: 1.700; }
.pg.on { background: #24272c; color: #b8b8b8; font-weight: 600; }
.hsplit { height: 12px; background: #262a32; display: grid; place-items: center; flex: none; }
.hsplit span { width: 28px; height: 5px; border-radius: 3px; background: #7e8390; }

/* widget tree */
.treehead { height: 57px; background: #101115; display: flex; align-items: center; padding: 3px 14px 0 10px; flex: none; color: #70747c; }
.treehead b { font-size: 13.500px; margin: 0 10px 0 15px; font-weight: 600; letter-spacing: -.05px; }
.treehead .push { margin-left: auto; }
.treehead .s16 { margin: 0 14px 0 17px; }
.tree { flex: 1; overflow: hidden; background: #101115; }
.tr { height: 30px; display: flex; align-items: center; padding-left: 9px; padding-right: 13px; font-size: 12.500px; letter-spacing: -.1px; }
.tr.first { margin-top: -17px; }
.tr i { width: 9.200px; align-self: stretch; border-left: 1px solid #25282d; flex: none; }
.tr i.hl { border-left: 2px solid #3c4045; }
.tr i.no { border-color: transparent; width: 12px; }
.tr .w { margin: 0 7px 0 2px; stroke-width: 1.700; }
.tr .s14.w { margin: 0 8px 0 3px; }
.tr .s15.w { margin: 0 7px 0 2px; }
.tr .s18.w { margin: 0 6px 0 1px; }
.tr .drawer.w { margin-left: -9px; margin-right: 10px; }
.data { color: #9a6a4c; margin-left: 8px; }
.act { color: #5d9d8f; margin-left: 9px; }
.addw { margin-left: auto; margin-right: 14px; }
.tr em { width: 6px; }
.branch { background: #171a1d; border-radius: 7px 7px 0 0; }
.tr.sel { background: #2c3c40; border-radius: 7px; color: #b8b8b8; font-weight: 600; }
.tr.sel i { border-color: #33464a; }
.tr.sel i.hl { border-color: #4b5b5f; }
.vsplit { width: 9px; background: #262a32; flex: none; margin-top: 2px; padding: 395px 2px 0; }
.vsplit span { display: block; height: 29px; border-radius: 3px; background: #7e8390; }

/* canvas */
.canvas { width: 1317px; flex: none; display: flex; flex-direction: column; }
.tools { height: 52px; flex: none; display: flex; padding: 9px 8px 0; gap: 7px; }
.tbox { height: 35px; background: #101115; border-radius: 8px; display: flex; align-items: center; box-shadow: 0 1px 3px #0005; }
.one { width: 34px; justify-content: center; }
.zoom { width: 98px; justify-content: space-between; padding: 0 8px; font-size: 14.500px; color: #b8b8b8; }
.modes { width: 143px; margin-left: auto; padding: 0 9px 0 10px; justify-content: space-between; }
.kb { margin-left: -3px; }
.stage { flex: 1; display: flex; justify-content: flex-start; padding-left: 493px; gap: 13px; }
.phone {
  width: 332px; height: 719px; border-radius: 7px; overflow: hidden;
  background: #b8b8b8; color: #1d2023; display: flex; flex-direction: column;
  border-right: 1px solid #777; font-family: Inter, sans-serif; font-size: 12px;
}
.appbar { height: 97px; background: #3d2ca6; color: #b8b8b8; display: flex; align-items: flex-end; padding: 0 0 13px 15px; gap: 36px; box-shadow: 0 1px 2px #0006; flex: none; }
.appbar .ic { margin-bottom: 2px; stroke-width: 2.600; }
.appbar h1 { font-size: 18.500px; font-weight: 700; line-height: 20px; letter-spacing: -.7px; }
.body { flex: 1; padding-top: 26px; }
.field { height: 40px; margin: 0 5px 11px; border: 1px solid #7cc4b8; border-radius: 5px; padding: 1px; }
.field div { height: 36px; border: 1.500px solid #3b4546; border-radius: 6px; background: #b0b9b8; display: flex; align-items: center; gap: 11px; padding-left: 10px; color: #56605f; font: 12px Inter, "Noto Sans CJK KR", sans-serif; letter-spacing: -.15px; }
.item { height: 76px; border-top: 1px solid #a9a9ab; border-bottom: 1px solid #a9a9ab; display: flex; color: #77787a; }
.item.live, .email.live { color: #1d2023; }
.item.live { border-color: #9999a2; }
.c1 { width: 170px; padding-left: 7px; }
.c1 p { height: 32px; display: flex; align-items: center; padding-top: 15px; font-size: 12px; letter-spacing: -.12px; }
.c1 .mail { margin-right: 15.500px; }
.c1 .resp { color: #7d73b4; height: 45px; padding: 0; letter-spacing: -.2px; }
.live .mail { color: #3d2ca6; }
.live .resp { color: #4a3bb0; }
.mail { width: 18px; height: 14px; color: #7d73b4; flex: none; }
.c2 { width: 32px; display: flex; flex-direction: column; align-items: center; padding-top: 14px; }
.c2 span { line-height: 15px; margin-left: 13px; }
.trash { width: 12px; height: 16px; margin-top: 14px; color: #5d5e60; flex: none; }
.live .trash { color: #111315; }
.c3 { display: flex; align-items: center; margin-left: 39px; white-space: nowrap; padding: 1px 0 0 7px; letter-spacing: -.18px; }
.picked { border: 1px solid #3e6b62; position: relative; line-height: 12px; margin-left: -1px; }
.picked b { position: absolute; left: -1px; top: -18px; height: 17px; padding: 0 4px; line-height: 17px; font-size: 9.500px; letter-spacing: 0; background: #3f6d63; color: #b8b8b8; border-radius: 3px 3px 0 0; }
.email { height: 27px; text-align: center; line-height: 28px; color: #77787a; }
.nav { height: 49px; border-top: 1px solid #aaa; display: flex; align-items: center; justify-content: space-between; padding: 0 48px 3px 46px; color: #40474c; flex: none; }
.nav .cur { color: #3d2ca6; }
.chips { display: flex; flex-direction: column; justify-content: space-between; height: 718px; margin-top: 1px; color: #b8b8b8; }
.chips div { width: 28px; height: 28px; border-radius: 6px; background: #222529; display: grid; place-items: center; }
.chips .ic { stroke-width: 2.500; }

/* properties panel */
.props { width: 269px; flex: none; margin-top: 2px; background: #101115; border-left: 1px solid #16191c; font-family: Inter, sans-serif; font-size: 12px; letter-spacing: -.05px; }
.props > div, .props section { padding-left: 10px; }
.props h3 { font-size: 12px; font-weight: 600; color: #b8b8b8; letter-spacing: -.35px; display: flex; align-items: center; gap: 6px; }
.props h3 .ic, .props label .ic { color: #4f535a; }
.props h3 .fold { color: #777b82; }
.props label { display: flex; align-items: center; gap: 5px; }
.props .o, .props label .o { color: #8a5b42; }
.phead { height: 28px; display: flex; align-items: center; gap: 6px; color: #b8b8b8; font-weight: 600; font-size: 11.500px; padding-bottom: 2px; }
.nameline { display: flex; gap: 6px; }
.name { width: 152px; height: 31px; border: 1px solid #26292e; border-radius: 8px; background: #070a0d; color: #b8b8b8; font: 13.500px/29px Roboto, sans-serif; padding-left: 10px; flex: none; }
.nb { width: 30px; height: 31px; border: 1px solid #26292e; border-radius: 8px; background: #15181b; color: #b8b8b8; display: grid; place-items: center; flex: none; }
.ptabs { margin: 10px 0 0 10px; height: 34px; background: #15181b; border-radius: 8px; display: flex; align-items: center; }
.props > .ptabs { padding: 2px 0 2px 1px; }
.ptabs div { width: 51.700px; height: 30px; display: grid; place-items: center; flex: none; }
.ptabs .on { background: #08090b; border-radius: 7px; color: #b8b8b8; width: 50px; }
.props section { border-bottom: 1px solid #212429; }
.styling { height: 80px; padding-top: 14px; }
.theme { height: 31px; margin-top: 10px; background: #262a32; border-radius: 8px 0 0 8px; color: #b8b8b8; text-align: center; font: 600 13.500px/31px Roboto, sans-serif; }
.textval { height: 69px; padding-top: 9px; }
.bound { margin-top: 4px; height: 30px; border: 1px solid #212429; border-right: 0; border-radius: 8px 0 0 8px; display: flex; align-items: center; gap: 6px; padding: 0 0 1px 10px; color: #9c6347; font-weight: 600; letter-spacing: -.25px; }
.bound .ic { color: #6c7078; }
.vis { height: 188px; padding-top: 10px; }
.fold { margin-left: auto; margin-right: 2px; }
.side-arrow { transform: rotate(-90deg); }
.pr { display: flex; }
.pr label { height: 15px; }
.cond { margin-top: 10px; height: 29px; }
.toggle { width: 38px; height: 23px; margin: -1px 0 0 auto; border: 1px solid #1f2226; border-radius: 12px; padding: 1px; }
.toggle::after { content: ""; display: block; width: 19px; height: 19px; border-radius: 50%; background: #1f2226; }
.resp2 { height: 32px; }
.rdev { display: flex; margin-left: auto; gap: 17.500px; color: #b8b8b8; padding-top: 3px; margin-right: 1px; }
.opa .o { margin-left: 1px; }
.slider { display: flex; align-items: center; height: 30px; margin-top: 4px; }
.slider span { width: 152px; height: 5px; margin-left: 6px; border-radius: 3px; background: #3d2ca6; }
.slider b { width: 12px; height: 12px; border-radius: 50%; background: #b8b8b8; margin-left: -5px; }
.slider div { margin-left: 8px; flex: 1; height: 30px; border: 1px solid #1f2226; border-right: 0; border-radius: 8px 0 0 8px; color: #b8b8b8; line-height: 27px; padding-left: 10px; }
.anim { margin-top: 8px; }
.pad { height: 313px; padding-top: 9px; }
.expand { display: flex; margin-top: 9px; }
.ecol { width: 135px; }
.ecol > div { display: flex; gap: 13px; margin-top: 10px; }
.lit { color: #b8b8b8; }
.num { width: 56px; height: 30px; border: 1px solid #1f2226; border-radius: 8px; margin-top: 4px; }
.padline { display: flex; align-items: center; height: 20px; margin-top: 11px; padding-right: 3px; }
.padline .cp { margin: 0 9px 0 auto; }
.padsw { width: 54px; height: 20px; border: 1px solid #1f2226; border-radius: 6px; display: flex; align-items: center; gap: 7px; margin-left: 6px; }
.padsw span { width: 29px; height: 19px; border-radius: 5px; background: #a5694b; color: #b8b8b8; display: grid; place-items: center; }
.padbox { height: 77px; margin-top: 3px; border: 1px solid #212429; border-radius: 8px 0 0 8px; display: flex; align-items: center; justify-content: space-between; font-size: 11px; }
.padbox div { display: flex; flex-direction: column; align-items: center; height: 69px; line-height: 12px; }
.padbox > b:nth-of-type(1) { margin: 0 66px 0 9px; }
.padbox > b:nth-of-type(2) { margin: 0 9px 0 66px; }
.padbox .t { margin: 7px 0 18px; }
.padbox .b { margin-bottom: 7px; }
.edge, .side { width: 12px; height: 6px; fill: none; stroke: #6c7078; stroke-width: 2; flex: none; }
.flip { transform: rotate(180deg); }
.side.l { transform: rotate(-90deg); }
.side.r { transform: rotate(90deg); }
.alignline { display: flex; align-items: center; height: 27px; padding-top: 3px; }
.alignline label { width: 113px; }
.align { display: flex; gap: 11.500px; }
.grid9 { width: 124px; height: 82px; border: 1px solid #212429; border-radius: 8px; display: grid; grid-template-columns: repeat(3, 8px); grid-template-rows: repeat(3, 8px); justify-content: space-between; align-content: space-between; padding: 9px 10px; flex: none; }
.grid9 i { background: #23282d; border-radius: 2px; }
.xy { padding-top: 7px; }
.testing { height: 37px; padding-top: 10px; }
.textprops { height: 40px; padding-top: 8px; }

/* variable dialog */
.dialog {
  position: absolute; left: 1318px; top: 206px; width: 291px; height: 451px;
  border: 2px solid #343944; border-radius: 9px; background: #15191b;
  color: #8d939d; font-size: 12.500px;
}
.grip { position: absolute; left: 133px; width: 19px; height: 4px; border-radius: 2px; background: #8b919b; }
.grip.top { top: -3px; }
.grip.bottom { bottom: -3px; }
.scroll { height: 386px; overflow: hidden; border-radius: 7px 7px 0 0; }
.dhead, .dvar { background: #282c34; padding-left: 11px; }
.dhead { height: 56px; padding-top: 10px; border-bottom: 1px solid #343944; line-height: 17px; font-weight: 600; letter-spacing: -.25px; }
.dhead b, .dhead span, .dvar b { display: block; }
.dialog b { color: #fff; font-size: 13.500px; font-weight: 700; letter-spacing: -.15px; }
.dvar { height: 79px; padding-top: 13px; border-bottom: 2px solid #343944; }
.vline { display: flex; align-items: center; height: 15px; letter-spacing: -.1px; }
.vline .s14 { margin-left: auto; }
.vline .s12 { margin: 0 16px 0 12px; }
.dvar b { display: flex; align-items: center; gap: 7px; height: 23px; letter-spacing: -.1px; }
.dvar b .ic { color: #8d939d; }
.dvar em { color: #cf8562; font-weight: 600; letter-spacing: -.25px; }
.dform { padding: 12px 14px 0 13px; font-family: Inter, sans-serif; font-size: 11.500px; }
.dform label { display: flex; align-items: center; gap: 5px; height: 16px; letter-spacing: -.18px; }
.select { width: 261px; height: 32px; margin-top: 3px; border: 1px solid #2c3036; border-radius: 7px; display: flex; align-items: center; justify-content: space-between; padding: 0 12px 2px 10px; color: #fff; font: 700 13.500px Roboto, sans-serif; }
.select .ic { color: #8d939d; stroke-width: 2.800; }
.select.short { height: 30px; justify-content: flex-end; padding-right: 14px; margin-top: 5px; }
.dform .l2 { margin-top: 13px; }
.dform .l3 { margin-top: 18px; font-weight: 500; }
.dform .l4 { margin-top: 17px; font-weight: 500; }
.bar { position: absolute; right: 2px; top: 0; width: 8px; height: 386px; background: #ffffff4d; border-radius: 4px 4px 0 0; }
.dfoot { display: flex; padding: 13px 12px 0 13px; }
.dfoot button { height: 34px; border-radius: 8px; border: 1px solid #2c3036; background: none; color: #fff; font-size: 13.500px; font-weight: 600; flex: none; }
.dfoot .remove { width: 71px; border-color: #b0403c; background: #2a1d1e; color: #c04a45; margin-right: 44px; font-weight: 500; }
.dfoot .cancel { width: 64px; margin-right: 9px; }
.dfoot .confirm { width: 72px; background: #543de6; border-color: #543de6; }
.pointer { position: absolute; left: 289px; top: 51px; width: 17px; height: 24px; background: #343944; clip-path: polygon(0 0, 100% 44%, 100% 56%, 0 100%); }

.fab { position: absolute; left: 1836px; top: 800px; width: 45px; height: 45px; border-radius: 50%; background: #543de6; display: grid; place-items: center; }
.fab svg { width: 30px; height: 30px; fill: none; stroke: #fff; stroke-width: 1.600; stroke-linecap: round; }
.fab .handle { stroke-width: 3; }

.notes { position: absolute; left: 0; top: 0; width: 1886px; height: 852px; pointer-events: none; fill: none; stroke: #ff5500; stroke-width: 6; stroke-linecap: round; stroke-linejoin: round; }
.notes text { font: bold 39px "Liberation Sans", sans-serif; fill: #ff5500; stroke-width: 1.500; letter-spacing: -1px; }
```
